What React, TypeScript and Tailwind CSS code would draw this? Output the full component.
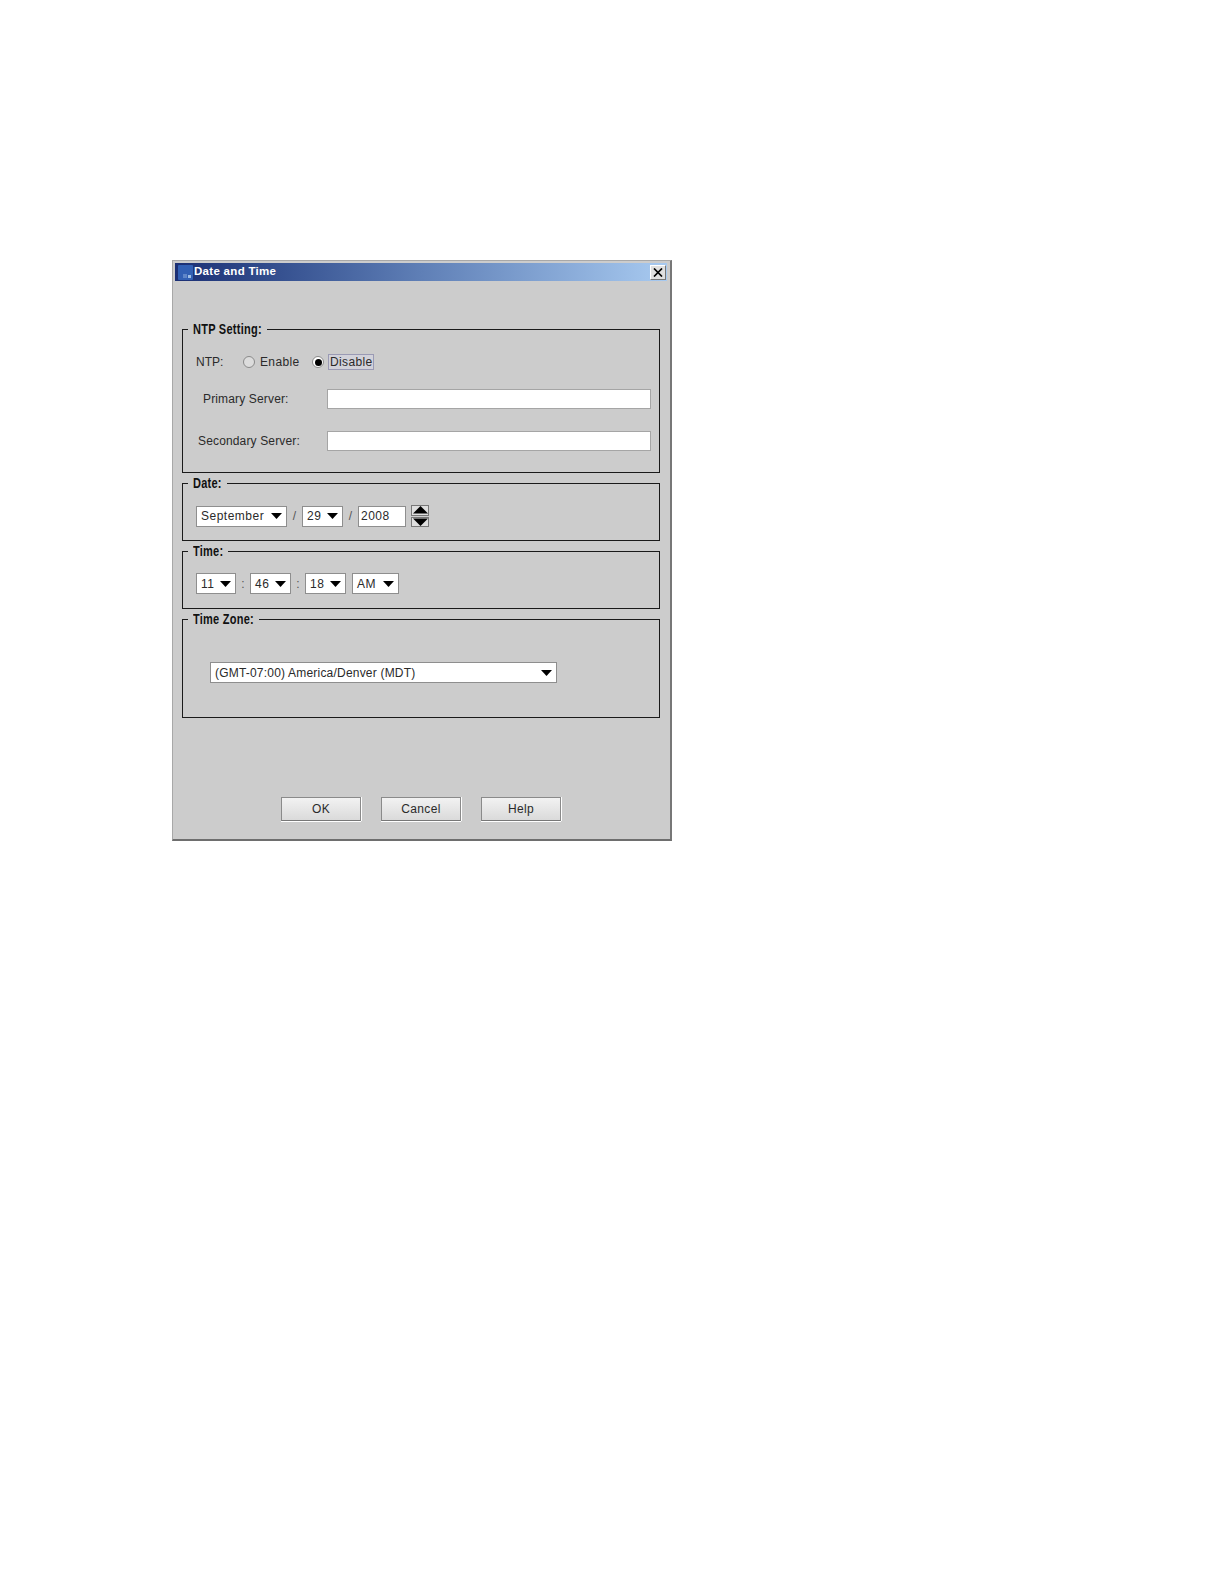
import React from 'react';

const font = "font-['Liberation_Sans',Arial,sans-serif]";

const Arrow = () => (
    <svg width="11" height="6" viewBox="0 0 11 6" className="shrink-0">
        <path d="M0 0 H11 L5.5 6 Z" fill="#000" />
    </svg>
);

const Group: React.FC<{ title: string; className: string; children: React.ReactNode }> = ({ title, className, children }) => (
    <div className={`relative border border-[#1a1a1a] ${className}`}>
        <span className="absolute left-[5px] top-[-8px] bg-[#cccccc] px-[5px] text-[11px] leading-[15px] font-bold tracking-[0.25px] text-[#111] whitespace-nowrap">
            {/* the original legend face is tall and condensed */}
            <span className="inline-block scale-y-[1.3]">{title}</span>
        </span>
        {children}
    </div>
);

const Select: React.FC<{ value: string; className: string }> = ({ value, className }) => (
    <div className={`flex items-center justify-between h-[21px] bg-white border border-[#8e8e8e] pl-[4px] pr-[4px] text-[12px] text-[#2a2a2a] ${className}`}>
        <span>{value}</span>
        <Arrow />
    </div>
);

const Sep: React.FC<{ text: string; className: string }> = ({ text, className }) => (
    <span className={`text-center text-[12px] text-[#555] ${className}`}>{text}</span>
);

const Button: React.FC<{ label: string }> = ({ label }) => (
    <button className="w-[80px] h-[24px] bg-gradient-to-b from-[#f2f2f2] to-[#dadada] border border-[#8a8a8a] border-b-[#777] shadow-[0_1px_0_#fff,1px_0_0_#fff] text-[12px] tracking-[0.35px] text-[#2a2a2a]">
        {label}
    </button>
);

const Spin: React.FC<{ d: string }> = ({ d }) => (
    <div className="flex-1 flex items-center justify-center bg-[#dedede] border border-[#777]">
        <svg width="15" height="8" viewBox="0 0 15 8"><path d={d} fill="#000" /></svg>
    </div>
);

export default function App() {
    return (
        <div className={`min-h-[1584px] bg-white pt-[260px] pl-[172px] ${font}`}>
            <div className="w-[500px] h-[581px] bg-[#cccccc] border border-[#a8a8a8] border-b-[2px] border-r-[2px] border-b-[#6e6e6e] border-r-[#777] pt-[2px]">
                {/* title bar */}
                <div className="ml-[2px] mr-[3px] h-[18px] flex items-center bg-gradient-to-r from-[#1b2f74] via-[#5f7fb6] to-[#a8caf0]">
                    <svg width="15" height="15" viewBox="0 0 15 15" className="ml-[3px]">
                        <rect width="15" height="15" rx="1" fill="#3260b4" />
                        <rect x="5" y="9" width="4" height="4" fill="#5f86c8" />
                        <rect x="10" y="10" width="3" height="3" fill="#9fbfe6" />
                    </svg>
                    <span className="ml-[1px] text-[11.5px] font-bold tracking-[0.3px] text-white">Date and Time</span>
                    <div className="ml-auto mr-[1px] w-[16px] h-[15px] flex items-center justify-center bg-[#e0e0e0] border border-[#777] border-t-white border-l-white">
                        <svg width="10" height="9" viewBox="0 0 10 9">
                            <path d="M1 0.5 L9 8.5 M9 0.5 L1 8.5" stroke="#000" strokeWidth="1.7" />
                        </svg>
                    </div>
                </div>

                <div className="pl-[9px] pr-[10px] pt-[48px] flex flex-col">
                    <Group title="NTP Setting:" className="h-[144px] pl-[13px] pr-[8px] pt-[23px]">
                        <div className="flex items-center h-[18px] text-[12px] text-[#2a2a2a]">
                            <span className="w-[47px]">NTP:</span>
                            <span className="w-[12px] h-[12px] rounded-full border border-[#8a8a8a] bg-[#dcdcdc]" />
                            <span className="ml-[5px] w-[52px] tracking-[0.35px]">Enable</span>
                            <span className="w-[12px] h-[12px] rounded-full border border-[#8a8a8a] bg-white flex items-center justify-center">
                                <span className="w-[7px] h-[7px] rounded-full bg-black" />
                            </span>
                            <span className="ml-[4px] border border-[#9a9ab4] bg-[#d2d2da] px-[1px] leading-[14px] tracking-[0.35px]">Disable</span>
                        </div>
                        <div className="flex items-center mt-[18px] h-[20px] text-[12px] tracking-[0.15px] text-[#2a2a2a]">
                            <span className="w-[131px] pl-[7px]">Primary Server:</span>
                            <div className="flex-1 h-[20px] bg-white border border-[#a5a5a5]" />
                        </div>
                        <div className="flex items-center mt-[22px] h-[20px] text-[12px] tracking-[0.15px] text-[#2a2a2a]">
                            <span className="w-[131px] pl-[2px]">Secondary Server:</span>
                            <div className="flex-1 h-[20px] bg-white border border-[#a5a5a5]" />
                        </div>
                    </Group>

                    <Group title="Date:" className="mt-[10px] h-[58px] pl-[13px] pt-[21px]">
                        <div className="flex items-center">
                            <Select value="September" className="w-[91px] tracking-[0.5px]" />
                            <Sep text="/" className="w-[15px]" />
                            <Select value="29" className="w-[41px] tracking-[0.5px]" />
                            <Sep text="/" className="w-[15px]" />
                            <div className="w-[48px] h-[21px] bg-white border border-[#8e8e8e] pl-[2px] text-[12px] leading-[19px] tracking-[0.5px] text-[#2a2a2a]">2008</div>
                            <div className="ml-[5px] w-[18px] h-[22px] flex flex-col gap-[1px]">
                                <Spin d="M0 7.5 H15 L7.5 0 Z" />
                                <Spin d="M0 0.5 H15 L7.5 8 Z" />
                            </div>
                        </div>
                    </Group>

                    <Group title="Time:" className="mt-[10px] h-[58px] pl-[13px] pt-[21px]">
                        <div className="flex items-center">
                            <Select value="11" className="w-[40px] tracking-[0.5px]" />
                            <Sep text=":" className="w-[14px]" />
                            <Select value="46" className="w-[41px] tracking-[0.5px]" />
                            <Sep text=":" className="w-[14px]" />
                            <Select value="18" className="w-[41px] tracking-[0.5px]" />
                            <Select value="AM" className="ml-[6px] w-[47px] tracking-[0.5px]" />
                        </div>
                    </Group>

                    <Group title="Time Zone:" className="mt-[10px] h-[99px] pl-[27px] pt-[42px]">
                        <Select value="(GMT-07:00) America/Denver (MDT)" className="w-[347px] tracking-[0.2px]" />
                    </Group>

                    <div className="mt-[79px] pl-[99px] flex gap-[20px]">
                        <Button label="OK" />
                        <Button label="Cancel" />
                        <Button label="Help" />
                    </div>
                </div>
            </div>
        </div>
    );
}
